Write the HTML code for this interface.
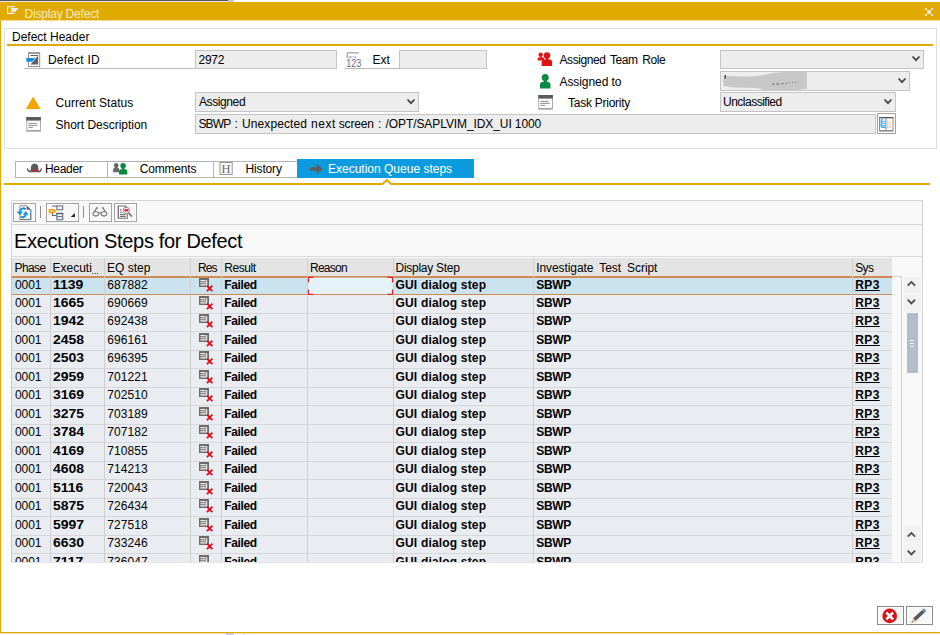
<!DOCTYPE html>
<html><head><meta charset="utf-8"><title>Display Defect</title>
<style>
html,body{margin:0;padding:0;background:#fff;}
body{width:940px;height:635px;overflow:hidden;position:relative;font-family:"Liberation Sans",sans-serif;font-size:12px;color:#000;}
.a{position:absolute;}
svg{position:absolute;overflow:visible;}
.t{position:absolute;white-space:nowrap;line-height:14px;height:14px;}
.fld{position:absolute;background:#EDEDED;border:1px solid #C4C4C4;box-sizing:border-box;}
.b{font-weight:700;}
.btn{position:absolute;box-sizing:border-box;border:1px solid #A2A2A2;background:#F6F6F6;box-shadow:inset 0 0 0 1px #FFFFFF;}
</style></head>
<body>
<div class="a" style="left:0;top:0;width:228px;height:1px;background:#585858"></div>
<div class="a" style="left:0;top:1px;width:228px;height:1px;background:#E6E6E6"></div>
<div class="a" style="left:228px;top:0;width:6px;height:2px;background:#C9C9C9"></div>
<div class="a" style="left:0;top:2px;width:940px;height:18px;background:#E0AA00"></div>
<div class="a" style="left:0;top:20px;width:940px;height:1px;background:#F3DD99"></div>
<svg style="left:0;top:0" width="24" height="20"><path d="M14.7 6.7H7.6V13.3H14.7" fill="none" stroke="#EFEDF6" stroke-width="1.2"/><path d="M10.9 7.9H18.5L15.4 11.7H10.9Z" fill="#EFEDF6"/></svg>
<div class="t" style="left:24.5px;top:6.7px;color:#F9ECBE;letter-spacing:-0.2px">Display Defect</div>
<svg style="left:924px;top:7px" width="10" height="10"><path d="M1.8 1.6L8.4 8.2M8.4 1.6L1.8 8.2" stroke="#F3F1F8" stroke-width="1.1" opacity="0.55"/><rect x="3.5" y="3.3" width="3.2" height="3.2" fill="#F1EFF8"/><rect x="1.2" y="1" width="1.6" height="1.6" fill="#F7F5FA"/><rect x="7.4" y="1" width="1.6" height="1.6" fill="#F7F5FA"/><rect x="1.2" y="7.2" width="1.6" height="1.6" fill="#F7F5FA"/><rect x="7.4" y="7.2" width="1.6" height="1.6" fill="#F7F5FA"/></svg>
<div class="a" style="left:0;top:20px;width:1px;height:614px;background:#E0AA00"></div>
<div class="a" style="left:1px;top:21px;width:1px;height:611px;background:#FBF3DA"></div>
<div class="a" style="left:0;top:632px;width:940px;height:1px;background:#E0AA00"></div>
<div class="a" style="left:0;top:633px;width:940px;height:1px;background:#F2E3B4"></div>
<div class="a" style="left:0;top:634px;width:940px;height:1px;background:#F8F8FA"></div>
<div class="a" style="left:226px;top:633px;width:8px;height:2px;background:#CACACE"></div>
<div class="a" style="left:243px;top:633px;width:2px;height:2px;background:#DEDEE2"></div>
<div class="a" style="left:4px;top:28px;width:933px;height:121px;border:1px solid #DEDEDE;box-sizing:border-box"></div>
<div class="t" style="left:12px;top:30px">Defect Header</div>
<div class="a" style="left:7px;top:44px;width:926px;height:2px;background:#E0AA00"></div>
<div class="a" style="left:24px;top:68px;width:171px;height:1px;background:#B9B9B9"></div>
<div class="t" style="left:48px;top:53px;letter-spacing:0.2px">Defect ID</div>
<div class="fld" style="left:195px;top:50px;width:142px;height:19px"></div>
<div class="t" style="left:198.5px;top:53px;letter-spacing:-0.25px">2972</div>
<div class="a" style="left:345px;top:68px;width:54px;height:1px;background:#B9B9B9"></div>
<div class="t" style="left:372.5px;top:53px">Ext</div>
<div class="fld" style="left:399px;top:50px;width:88px;height:19px"></div>
<div class="t" style="left:559.5px;top:53px;letter-spacing:-0.42px;word-spacing:1.7px">Assigned Team Role</div>
<div class="fld" style="left:720px;top:50px;width:204px;height:19px"></div>
<div class="t" style="left:559.5px;top:74.5px;letter-spacing:-0.08px">Assigned to</div>
<div class="fld" style="left:720px;top:71px;width:190px;height:20px"></div>
<svg style="left:720px;top:71px" width="100" height="20"><path d="M3.3 4.9L30 5.5C40 5.5 45 3.6 52 2.3C58 1.2 62 0.9 68 0.9H87V18C80 19 70 19 60 19.2H48C42 19 40 17.5 36 17L15 16.5C10 16.5 8 15 3.3 14.9Z" fill="#C7C7C7"/><rect x="4.6" y="3.9" width="1.3" height="3.8" fill="#3E3E66"/><path d="M52 13.2h2.5m1.5-.2h3.5m1.8-.4h2.4m2-.4h1.4m2-.4h1m2-.3h1m2-.2h1" stroke="#4A4A4A" stroke-width="0.9" opacity="0.75"/></svg>
<div class="t" style="left:55.5px;top:95.5px;letter-spacing:0.03px">Current Status</div>
<div class="fld" style="left:195px;top:92px;width:224px;height:20px"></div>
<div class="t" style="left:199px;top:95px;letter-spacing:-0.4px">Assigned</div>
<div class="t" style="left:568px;top:95.5px;letter-spacing:-0.25px">Task Priority</div>
<div class="fld" style="left:720px;top:92px;width:176px;height:20px"></div>
<div class="t" style="left:723px;top:95px;letter-spacing:-0.5px">Unclassified</div>
<div class="t" style="left:55.5px;top:117.5px;letter-spacing:-0.02px">Short Description</div>
<div class="fld" style="left:195px;top:114px;width:681px;height:20px"></div>
<div class="t" style="left:198.5px;top:117px"><span style="letter-spacing:-0.9px">SBWP</span><span style="word-spacing:0.9px"> : </span><span style="letter-spacing:0.08px">Unexpected</span><span style="word-spacing:0.7px"> </span><span style="letter-spacing:0.6px">next</span><span style="word-spacing:-0.6px"> </span><span style="letter-spacing:-0.17px">screen</span><span style="word-spacing:0.9px"> : </span><span style="letter-spacing:-0.094px">/OPT/SAPLVIM_IDX_UI 1000</span></div>
<div class="btn" style="left:877px;top:113px;width:19px;height:21px;background:#FBFBFB"></div>
<svg style="left:911.6px;top:56.4px" width="8" height="5"><path d="M0.5 0.5L4 4.2L7.5 0.5" fill="none" stroke="#424242" stroke-width="1.7"/></svg>
<svg style="left:898.0px;top:78.0px" width="8" height="5"><path d="M0.5 0.5L4 4.2L7.5 0.5" fill="none" stroke="#424242" stroke-width="1.7"/></svg>
<svg style="left:884.0px;top:99.10000000000001px" width="8" height="5"><path d="M0.5 0.5L4 4.2L7.5 0.5" fill="none" stroke="#424242" stroke-width="1.7"/></svg>
<svg style="left:407.2px;top:99.10000000000001px" width="8" height="5"><path d="M0.5 0.5L4 4.2L7.5 0.5" fill="none" stroke="#424242" stroke-width="1.7"/></svg>
<svg style="left:26px;top:52px" width="15" height="15"><rect x="2.5" y="0.7" width="11.2" height="13.8" fill="#fff" stroke="#8E8E8E"/><path d="M3 1.4H13.2" stroke="#9A9A9A" stroke-width="1.2"/><path d="M4.5 3.6H12V12.5H4.5Z" fill="#fff"/><path d="M12.1 3.4V12.6H4.4Z" fill="#606060"/><path d="M4.4 3.5H12.1" stroke="#606060" stroke-width="1"/><path d="M0.4 6H9.1L6.1 9.8H0.4Z" fill="#0A8FE6"/></svg>
<svg style="left:26px;top:96px" width="15" height="14"><path d="M7.1 0.5L14.7 13H-0.1Z" fill="#F0A800"/></svg>
<svg style="left:26px;top:117px" width="15" height="15"><rect x="0.3" y="0" width="14.6" height="14.7" fill="#A4A4A4"/><rect x="1.2" y="3.4" width="12.8" height="9.6" fill="#fff"/><rect x="0.3" y="0" width="14.6" height="3.5" fill="#5C5C5C"/><path d="M2.4 6.4H10.6M2.4 8.4H11.6M2.4 10.4H7" stroke="#8C8C8C" stroke-width="1"/></svg>
<svg style="left:538px;top:95px" width="15" height="15"><rect x="0.3" y="0" width="14.6" height="14.7" fill="#A4A4A4"/><rect x="1.2" y="3.4" width="12.8" height="9.6" fill="#fff"/><rect x="0.3" y="0" width="14.6" height="3.5" fill="#5C5C5C"/><path d="M2.4 6.4H10.6M2.4 8.4H11.6M2.4 10.4H7" stroke="#8C8C8C" stroke-width="1"/></svg>
<svg style="left:537px;top:52px" width="16" height="14"><g fill="#DC1414"><circle cx="3.7" cy="2.7" r="2.2"/><path d="M0.7 8.6V6.8Q0.7 5.2 2.4 5.2H5.6Q7.2 5.2 7.2 6.8V8.6Z"/><circle cx="10" cy="3.5" r="3.2"/><rect x="8.6" y="5.5" width="2.8" height="3"/><path d="M4.6 13.9V10Q4.6 7.5 7.2 7.5H12.6Q15.1 7.5 15.1 10V13.9Z"/></g></svg>
<svg style="left:540px;top:74px" width="10.5" height="14.5" viewBox="0 0 10.5 14.5" preserveAspectRatio="none"><g fill="#0A8A40"><circle cx="5.2" cy="3.6" r="3.5"/><rect x="3.6" y="6" width="3.3" height="3"/><path d="M0 14.5V10.6Q0 7.9 2.6 7.9H7.9Q10.5 7.9 10.5 10.6V14.5Z"/></g></svg>
<svg style="left:346px;top:52px" width="16" height="16"><path d="M1.2 6.2V0.9H12.9" fill="none" stroke="#8C8890" stroke-width="1"/><path d="M3.2 4.2v2M4.6 4.2v2M6 4.2v2M7.4 4.2l2 2M9.6 4.2v2" stroke="#8A92B0" stroke-width="0.8"/><text x="0.2" y="14.7" font-family="Liberation Sans, sans-serif" font-size="10" fill="#5E6A86" textLength="15" lengthAdjust="spacingAndGlyphs">123</text></svg>
<svg style="left:879px;top:117px" width="15" height="15"><rect x="0.5" y="0.6" width="13.5" height="13.4" fill="#fff" stroke="#8A86A8" stroke-width="1"/><path d="M0.2 0.7H14.3" stroke="#555" stroke-width="1.3"/><path d="M0.5 13.6H14" stroke="#8C8C8C" stroke-width="1.2"/><path d="M6.9 1V13.5" stroke="#9A9A9A" stroke-width="1.2"/><path d="M2.2 2.8V10.5" stroke="#1E9EE8" stroke-width="1.2"/><path d="M2 2.8H4M3 4.8H6.2M3 6.8H6.2M3 8.8H6.2M3 10.4H6.2" stroke="#2BA6EC" stroke-width="1.1"/><path d="M8.2 4.8H12.6M8.2 6.8H12.6M8.2 8.8H12.6M8.2 10.4H12.6" stroke="#B0A8B8" stroke-width="1" stroke-dasharray="1.2 1"/><path d="M13.3 1.3V13" stroke="#F2C58E" stroke-width="0.8"/></svg>
<div class="a" style="left:15px;top:161px;width:283px;height:17px;border:1px solid #B2B2B2;box-sizing:border-box;background:#fff"></div>
<div class="a" style="left:107px;top:162px;width:1px;height:15px;background:#B2B2B2"></div>
<div class="a" style="left:213px;top:162px;width:1px;height:15px;background:#B2B2B2"></div>
<div class="t" style="left:45px;top:162.3px;letter-spacing:-0.3px">Header</div>
<div class="t" style="left:139.7px;top:162.3px;letter-spacing:-0.18px">Comments</div>
<div class="t" style="left:245.5px;top:162.3px;letter-spacing:-0.15px">History</div>
<div class="a" style="left:297px;top:159px;width:177px;height:19px;background:#0D9BE0"></div>
<div class="t" style="left:328px;top:162px;color:#fff">Execution Queue steps</div>
<svg style="left:27px;top:163px" width="15" height="10"><path d="M3.7 7.2Q3.4 0.4 7.6 0.4Q11.8 0.4 11.5 7.2Z" fill="#5C5C5C"/><rect x="3.5" y="6.8" width="8.2" height="1.8" fill="#C0282C"/><path d="M0.4 5.3Q1 8.9 3.8 8.7H11.4Q14 8.9 14.5 5.3" fill="none" stroke="#4A4A5A" stroke-width="1.1"/></svg>
<svg style="left:113px;top:162.6px" width="7" height="10"><g fill="#686868"><ellipse cx="3.2" cy="2.5" rx="2.3" ry="2.4"/><rect x="1.8" y="3.8" width="2.8" height="2.4"/><path d="M0.2 9.3V6.4Q0.2 5 1.6 5H4.8Q6.2 5 6.2 6.4V9.3Z"/></g></svg>
<svg style="left:119.3px;top:162.8px" width="8.3" height="11.5" viewBox="0 0 10.5 14.5" preserveAspectRatio="none"><g fill="#0A8A40"><circle cx="5.2" cy="3.6" r="3.5"/><rect x="3.6" y="6" width="3.3" height="3"/><path d="M0 14.5V10.6Q0 7.9 2.6 7.9H7.9Q10.5 7.9 10.5 10.6V14.5Z"/></g></svg>
<svg style="left:219px;top:162px" width="14" height="13"><rect x="1" y="0.5" width="12.2" height="12" fill="#fff" stroke="#939393" stroke-width="1"/><text x="2.6" y="11" font-family="Liberation Serif, serif" font-size="13" fill="#6E6266" textLength="9" lengthAdjust="spacingAndGlyphs">H</text></svg>
<svg style="left:310px;top:163.5px" width="13" height="10"><path d="M0 3.3H6.5V0L13 5L6.5 10V6.7H0Z" fill="#5E5E5E"/></svg>
<svg style="left:4px;top:178px" width="928" height="9"><path d="M0 6H378.5L382.8 2L387.2 6H926" fill="none" stroke="#E0AA00" stroke-width="1.9"/></svg>
<div class="a" style="left:11px;top:200px;width:912px;height:362px;background:#F8F8F8;border:1px solid #D6D6D6;border-bottom:none;box-sizing:border-box"></div>
<div class="a" style="left:12px;top:224px;width:910px;height:1px;background:#D6D6D6"></div>
<div class="a" style="left:12px;top:256px;width:910px;height:1px;background:#DADADA"></div>
<div class="a" style="left:11px;top:562px;width:912px;height:1px;background:#E4E4E4"></div>
<div class="btn" style="left:13px;top:203px;width:23px;height:19px"></div>
<div class="btn" style="left:46px;top:203px;width:33px;height:19px"></div>
<div class="btn" style="left:89px;top:203px;width:23px;height:19px"></div>
<div class="btn" style="left:114px;top:203px;width:23px;height:19px"></div>
<div class="a" style="left:40px;top:206px;width:1px;height:12px;background:#8E8E8E"></div>
<div class="a" style="left:83px;top:206px;width:1px;height:12px;background:#8E8E8E"></div>
<svg style="left:13px;top:203px" width="23" height="19"><path d="M6.9 2.7H13.6L17.7 6.8V16.5H6.9Z" fill="#fff" stroke="#8C8C8C" stroke-width="1"/><path d="M13.6 2.6L17.8 6.8H13.6Z" fill="#6A5A5A"/><path d="M17.8 6.8V16.6" stroke="#3D78C8" stroke-width="0.9"/><path d="M6.9 16.6H17.8" stroke="#6E6E6E" stroke-width="1.1"/><path d="M6.9 3V16" stroke="#E8C49A" stroke-width="0.8"/><g fill="none" stroke="#0F8FEE" stroke-width="2"><path d="M12.6 6.2A3.5 3.5 0 0 0 6.9 8.6"/><path d="M7.6 13.6A3.5 3.5 0 0 0 12.9 11.6"/></g><path d="M3.6 8.4H10.2L6.9 12.2Z" fill="#0F8FEE"/><path d="M9.7 11.8H15.7L12.7 8Z" fill="#0F8FEE"/></svg>
<svg style="left:46px;top:203px" width="33" height="19"><path d="M6.2 3.1H11" stroke="#7A8294" stroke-width="1.3"/><rect x="10.9" y="2.9" width="5.8" height="3.8" fill="#F2F8FF" stroke="#6C7488" stroke-width="1.1"/><path d="M6.4 10V12.5H10.6" fill="none" stroke="#5E6474" stroke-width="1.1"/><rect x="10.8" y="10.5" width="5.9" height="6.2" fill="#EEF4FC" stroke="#6C7890" stroke-width="1.2"/><path d="M10.4 10.5H17.2" stroke="#585C66" stroke-width="1.3"/><path d="M11 13.6H16.6" stroke="#6C7890" stroke-width="1.1"/><path d="M2.7 5.9H7.8L10.5 8.05L7.8 10.2H2.7Z" fill="#F2A200"/><path d="M4.2 8.05H7.4" stroke="#FCEBC0" stroke-width="1.1"/><path d="M28.9 9.9V14.1H24.8Z" fill="#1A1A1A"/></svg>
<svg style="left:89px;top:203px" width="23" height="19"><g fill="none" stroke="#747474" stroke-width="1.15"><path d="M4.9 9.2L7.9 4.6L8.9 5.4"/><path d="M16.7 9.2L13.9 4.6L12.9 5.4"/><rect x="4" y="8.7" width="5.5" height="4.1" rx="1.9" fill="#FDFDFD"/><rect x="12.2" y="8.7" width="5.5" height="4.1" rx="1.9" fill="#FDFDFD"/><path d="M9.4 10.1H12.3"/></g></svg>
<svg style="left:114px;top:203px" width="23" height="19"><path d="M4.3 3H11.3L13.2 5V15.2H4.3Z" fill="#fff" stroke="#6C6C6C" stroke-width="1.1"/><path d="M4.3 3V15.2" stroke="#8A5A9A" stroke-width="0.6"/><path d="M5.9 6.9H7.6M5.9 9.2H8.2M5.9 11.5H11.6M5.9 13.4H11.6" stroke="#6E6E6E" stroke-width="1.1"/><circle cx="12.3" cy="7.4" r="3.2" fill="#F6F2F4" stroke="#8E8E98" stroke-width="1"/><ellipse cx="12.4" cy="7.2" rx="2.2" ry="1.25" fill="#E61C24"/><path d="M14.6 9.9L17.9 13.6" stroke="#6A6A6A" stroke-width="1.5"/></svg>
<div class="a" style="left:14px;top:229px;font-size:20px;line-height:24px;white-space:nowrap;letter-spacing:-0.33px">Execution Steps for Defect</div>
<div class="a" style="left:12px;top:258px;width:880px;height:19px;background:#E4E4E4"></div>
<div class="t" style="left:14.5px;top:261px;letter-spacing:-0.6px;word-spacing:0px">Phase</div>
<div class="t" style="left:52.5px;top:261px;letter-spacing:0px;word-spacing:0px">Executi</div>
<div class="t" style="left:107px;top:261px;letter-spacing:0px;word-spacing:0px">EQ step</div>
<div class="t" style="left:198px;top:261px;letter-spacing:-0.9px;word-spacing:0px">Res</div>
<div class="t" style="left:224.2px;top:261px;letter-spacing:-0.4px;word-spacing:0px">Result</div>
<div class="t" style="left:310px;top:261px;letter-spacing:-0.75px;word-spacing:0px">Reason</div>
<div class="t" style="left:395.5px;top:261px;letter-spacing:-0.27px;word-spacing:0px">Display Step</div>
<div class="t" style="left:536.2px;top:261px;letter-spacing:-0.08px;word-spacing:2.9px">Investigate Test Script</div>
<div class="t" style="left:855.2px;top:261px;letter-spacing:-0.6px;word-spacing:0px">Sys</div>
<div class="a" style="left:92px;top:273px;width:1px;height:1px;background:#444"></div><div class="a" style="left:94px;top:273px;width:2px;height:1px;background:#777"></div><div class="a" style="left:97px;top:273px;width:1px;height:1px;background:#444"></div>
<div class="a" style="left:12px;top:277px;width:880px;height:285px;overflow:hidden">
<div class="a" style="left:0;top:0.60px;width:880px;height:17.90px;background:#CBE2EF"></div>
<div class="t" style="left:3px;top:1.00px;letter-spacing:-0.1px">0001</div>
<div class="t b" style="left:40.5px;top:1.00px;transform:scaleX(1.165);transform-origin:0 50%">1139</div>
<div class="t" style="left:95.3px;top:1.00px;letter-spacing:0.05px">687882</div>
<div class="t b" style="left:212.2px;top:1.00px;letter-spacing:-0.35px">Failed</div>
<div class="t b" style="left:383.5px;top:1.00px;letter-spacing:0.18px">GUI dialog step</div>
<div class="t b" style="left:524.2px;top:1.00px;letter-spacing:-0.3px">SBWP</div>
<div class="t b" style="left:843.3px;top:1.00px;letter-spacing:0.35px;text-decoration:underline">RP3</div>
<svg style="left:187px;top:1.20px" width="15" height="14"><rect x="0" y="0" width="10" height="9" fill="#6C6C6C"/><path d="M1.4 2.6H6.2" stroke="#EDEDED" stroke-width="1.2"/><path d="M7.4 2.2V7.8" stroke="#E8E8E8" stroke-width="1.6"/><path d="M1.4 4.8H6M1.4 6.9H6.4" stroke="#F4F4F4" stroke-width="1.1"/><path d="M7.9 7.6L13.4 13.2M13.4 7.6L7.9 13.2" stroke="#E0101C" stroke-width="1.9"/></svg>
<div class="a" style="left:0;top:18.00px;width:880px;height:19.00px;background:#E9EDF1"></div>
<div class="a" style="left:0;top:35.50px;width:880px;height:1px;background:#D5D8DB"></div>
<div class="t" style="left:3px;top:18.90px;letter-spacing:-0.1px">0001</div>
<div class="t b" style="left:40.5px;top:18.90px;transform:scaleX(1.165);transform-origin:0 50%">1665</div>
<div class="t" style="left:95.3px;top:18.90px;letter-spacing:0.05px">690669</div>
<div class="t b" style="left:212.2px;top:18.90px;letter-spacing:-0.35px">Failed</div>
<div class="t b" style="left:383.5px;top:18.90px;letter-spacing:0.18px">GUI dialog step</div>
<div class="t b" style="left:524.2px;top:18.90px;letter-spacing:-0.3px">SBWP</div>
<div class="t b" style="left:843.3px;top:18.90px;letter-spacing:0.35px;text-decoration:underline">RP3</div>
<svg style="left:187px;top:18.60px" width="15" height="14"><rect x="0" y="0" width="10" height="9" fill="#6C6C6C"/><path d="M1.4 2.6H6.2" stroke="#EDEDED" stroke-width="1.2"/><path d="M7.4 2.2V7.8" stroke="#E8E8E8" stroke-width="1.6"/><path d="M1.4 4.8H6M1.4 6.9H6.4" stroke="#F4F4F4" stroke-width="1.1"/><path d="M7.9 7.6L13.4 13.2M13.4 7.6L7.9 13.2" stroke="#E0101C" stroke-width="1.9"/></svg>
<div class="a" style="left:0;top:36.50px;width:880px;height:19.00px;background:#E9EDF1"></div>
<div class="a" style="left:0;top:54.00px;width:880px;height:1px;background:#D5D8DB"></div>
<div class="t" style="left:3px;top:37.40px;letter-spacing:-0.1px">0001</div>
<div class="t b" style="left:40.5px;top:37.40px;transform:scaleX(1.165);transform-origin:0 50%">1942</div>
<div class="t" style="left:95.3px;top:37.40px;letter-spacing:0.05px">692438</div>
<div class="t b" style="left:212.2px;top:37.40px;letter-spacing:-0.35px">Failed</div>
<div class="t b" style="left:383.5px;top:37.40px;letter-spacing:0.18px">GUI dialog step</div>
<div class="t b" style="left:524.2px;top:37.40px;letter-spacing:-0.3px">SBWP</div>
<div class="t b" style="left:843.3px;top:37.40px;letter-spacing:0.35px;text-decoration:underline">RP3</div>
<svg style="left:187px;top:37.10px" width="15" height="14"><rect x="0" y="0" width="10" height="9" fill="#6C6C6C"/><path d="M1.4 2.6H6.2" stroke="#EDEDED" stroke-width="1.2"/><path d="M7.4 2.2V7.8" stroke="#E8E8E8" stroke-width="1.6"/><path d="M1.4 4.8H6M1.4 6.9H6.4" stroke="#F4F4F4" stroke-width="1.1"/><path d="M7.9 7.6L13.4 13.2M13.4 7.6L7.9 13.2" stroke="#E0101C" stroke-width="1.9"/></svg>
<div class="a" style="left:0;top:55.00px;width:880px;height:19.00px;background:#E9EDF1"></div>
<div class="a" style="left:0;top:72.50px;width:880px;height:1px;background:#D5D8DB"></div>
<div class="t" style="left:3px;top:55.90px;letter-spacing:-0.1px">0001</div>
<div class="t b" style="left:40.5px;top:55.90px;transform:scaleX(1.165);transform-origin:0 50%">2458</div>
<div class="t" style="left:95.3px;top:55.90px;letter-spacing:0.05px">696161</div>
<div class="t b" style="left:212.2px;top:55.90px;letter-spacing:-0.35px">Failed</div>
<div class="t b" style="left:383.5px;top:55.90px;letter-spacing:0.18px">GUI dialog step</div>
<div class="t b" style="left:524.2px;top:55.90px;letter-spacing:-0.3px">SBWP</div>
<div class="t b" style="left:843.3px;top:55.90px;letter-spacing:0.35px;text-decoration:underline">RP3</div>
<svg style="left:187px;top:55.60px" width="15" height="14"><rect x="0" y="0" width="10" height="9" fill="#6C6C6C"/><path d="M1.4 2.6H6.2" stroke="#EDEDED" stroke-width="1.2"/><path d="M7.4 2.2V7.8" stroke="#E8E8E8" stroke-width="1.6"/><path d="M1.4 4.8H6M1.4 6.9H6.4" stroke="#F4F4F4" stroke-width="1.1"/><path d="M7.9 7.6L13.4 13.2M13.4 7.6L7.9 13.2" stroke="#E0101C" stroke-width="1.9"/></svg>
<div class="a" style="left:0;top:73.50px;width:880px;height:19.00px;background:#E9EDF1"></div>
<div class="a" style="left:0;top:91.00px;width:880px;height:1px;background:#D5D8DB"></div>
<div class="t" style="left:3px;top:74.40px;letter-spacing:-0.1px">0001</div>
<div class="t b" style="left:40.5px;top:74.40px;transform:scaleX(1.165);transform-origin:0 50%">2503</div>
<div class="t" style="left:95.3px;top:74.40px;letter-spacing:0.05px">696395</div>
<div class="t b" style="left:212.2px;top:74.40px;letter-spacing:-0.35px">Failed</div>
<div class="t b" style="left:383.5px;top:74.40px;letter-spacing:0.18px">GUI dialog step</div>
<div class="t b" style="left:524.2px;top:74.40px;letter-spacing:-0.3px">SBWP</div>
<div class="t b" style="left:843.3px;top:74.40px;letter-spacing:0.35px;text-decoration:underline">RP3</div>
<svg style="left:187px;top:74.10px" width="15" height="14"><rect x="0" y="0" width="10" height="9" fill="#6C6C6C"/><path d="M1.4 2.6H6.2" stroke="#EDEDED" stroke-width="1.2"/><path d="M7.4 2.2V7.8" stroke="#E8E8E8" stroke-width="1.6"/><path d="M1.4 4.8H6M1.4 6.9H6.4" stroke="#F4F4F4" stroke-width="1.1"/><path d="M7.9 7.6L13.4 13.2M13.4 7.6L7.9 13.2" stroke="#E0101C" stroke-width="1.9"/></svg>
<div class="a" style="left:0;top:92.00px;width:880px;height:19.00px;background:#E9EDF1"></div>
<div class="a" style="left:0;top:109.50px;width:880px;height:1px;background:#D5D8DB"></div>
<div class="t" style="left:3px;top:92.90px;letter-spacing:-0.1px">0001</div>
<div class="t b" style="left:40.5px;top:92.90px;transform:scaleX(1.165);transform-origin:0 50%">2959</div>
<div class="t" style="left:95.3px;top:92.90px;letter-spacing:0.05px">701221</div>
<div class="t b" style="left:212.2px;top:92.90px;letter-spacing:-0.35px">Failed</div>
<div class="t b" style="left:383.5px;top:92.90px;letter-spacing:0.18px">GUI dialog step</div>
<div class="t b" style="left:524.2px;top:92.90px;letter-spacing:-0.3px">SBWP</div>
<div class="t b" style="left:843.3px;top:92.90px;letter-spacing:0.35px;text-decoration:underline">RP3</div>
<svg style="left:187px;top:92.60px" width="15" height="14"><rect x="0" y="0" width="10" height="9" fill="#6C6C6C"/><path d="M1.4 2.6H6.2" stroke="#EDEDED" stroke-width="1.2"/><path d="M7.4 2.2V7.8" stroke="#E8E8E8" stroke-width="1.6"/><path d="M1.4 4.8H6M1.4 6.9H6.4" stroke="#F4F4F4" stroke-width="1.1"/><path d="M7.9 7.6L13.4 13.2M13.4 7.6L7.9 13.2" stroke="#E0101C" stroke-width="1.9"/></svg>
<div class="a" style="left:0;top:110.50px;width:880px;height:19.00px;background:#E9EDF1"></div>
<div class="a" style="left:0;top:128.00px;width:880px;height:1px;background:#D5D8DB"></div>
<div class="t" style="left:3px;top:111.40px;letter-spacing:-0.1px">0001</div>
<div class="t b" style="left:40.5px;top:111.40px;transform:scaleX(1.165);transform-origin:0 50%">3169</div>
<div class="t" style="left:95.3px;top:111.40px;letter-spacing:0.05px">702510</div>
<div class="t b" style="left:212.2px;top:111.40px;letter-spacing:-0.35px">Failed</div>
<div class="t b" style="left:383.5px;top:111.40px;letter-spacing:0.18px">GUI dialog step</div>
<div class="t b" style="left:524.2px;top:111.40px;letter-spacing:-0.3px">SBWP</div>
<div class="t b" style="left:843.3px;top:111.40px;letter-spacing:0.35px;text-decoration:underline">RP3</div>
<svg style="left:187px;top:111.10px" width="15" height="14"><rect x="0" y="0" width="10" height="9" fill="#6C6C6C"/><path d="M1.4 2.6H6.2" stroke="#EDEDED" stroke-width="1.2"/><path d="M7.4 2.2V7.8" stroke="#E8E8E8" stroke-width="1.6"/><path d="M1.4 4.8H6M1.4 6.9H6.4" stroke="#F4F4F4" stroke-width="1.1"/><path d="M7.9 7.6L13.4 13.2M13.4 7.6L7.9 13.2" stroke="#E0101C" stroke-width="1.9"/></svg>
<div class="a" style="left:0;top:129.00px;width:880px;height:19.00px;background:#E9EDF1"></div>
<div class="a" style="left:0;top:146.50px;width:880px;height:1px;background:#D5D8DB"></div>
<div class="t" style="left:3px;top:129.90px;letter-spacing:-0.1px">0001</div>
<div class="t b" style="left:40.5px;top:129.90px;transform:scaleX(1.165);transform-origin:0 50%">3275</div>
<div class="t" style="left:95.3px;top:129.90px;letter-spacing:0.05px">703189</div>
<div class="t b" style="left:212.2px;top:129.90px;letter-spacing:-0.35px">Failed</div>
<div class="t b" style="left:383.5px;top:129.90px;letter-spacing:0.18px">GUI dialog step</div>
<div class="t b" style="left:524.2px;top:129.90px;letter-spacing:-0.3px">SBWP</div>
<div class="t b" style="left:843.3px;top:129.90px;letter-spacing:0.35px;text-decoration:underline">RP3</div>
<svg style="left:187px;top:129.60px" width="15" height="14"><rect x="0" y="0" width="10" height="9" fill="#6C6C6C"/><path d="M1.4 2.6H6.2" stroke="#EDEDED" stroke-width="1.2"/><path d="M7.4 2.2V7.8" stroke="#E8E8E8" stroke-width="1.6"/><path d="M1.4 4.8H6M1.4 6.9H6.4" stroke="#F4F4F4" stroke-width="1.1"/><path d="M7.9 7.6L13.4 13.2M13.4 7.6L7.9 13.2" stroke="#E0101C" stroke-width="1.9"/></svg>
<div class="a" style="left:0;top:147.50px;width:880px;height:19.00px;background:#E9EDF1"></div>
<div class="a" style="left:0;top:165.00px;width:880px;height:1px;background:#D5D8DB"></div>
<div class="t" style="left:3px;top:148.40px;letter-spacing:-0.1px">0001</div>
<div class="t b" style="left:40.5px;top:148.40px;transform:scaleX(1.165);transform-origin:0 50%">3784</div>
<div class="t" style="left:95.3px;top:148.40px;letter-spacing:0.05px">707182</div>
<div class="t b" style="left:212.2px;top:148.40px;letter-spacing:-0.35px">Failed</div>
<div class="t b" style="left:383.5px;top:148.40px;letter-spacing:0.18px">GUI dialog step</div>
<div class="t b" style="left:524.2px;top:148.40px;letter-spacing:-0.3px">SBWP</div>
<div class="t b" style="left:843.3px;top:148.40px;letter-spacing:0.35px;text-decoration:underline">RP3</div>
<svg style="left:187px;top:148.10px" width="15" height="14"><rect x="0" y="0" width="10" height="9" fill="#6C6C6C"/><path d="M1.4 2.6H6.2" stroke="#EDEDED" stroke-width="1.2"/><path d="M7.4 2.2V7.8" stroke="#E8E8E8" stroke-width="1.6"/><path d="M1.4 4.8H6M1.4 6.9H6.4" stroke="#F4F4F4" stroke-width="1.1"/><path d="M7.9 7.6L13.4 13.2M13.4 7.6L7.9 13.2" stroke="#E0101C" stroke-width="1.9"/></svg>
<div class="a" style="left:0;top:166.00px;width:880px;height:19.00px;background:#E9EDF1"></div>
<div class="a" style="left:0;top:183.50px;width:880px;height:1px;background:#D5D8DB"></div>
<div class="t" style="left:3px;top:166.90px;letter-spacing:-0.1px">0001</div>
<div class="t b" style="left:40.5px;top:166.90px;transform:scaleX(1.165);transform-origin:0 50%">4169</div>
<div class="t" style="left:95.3px;top:166.90px;letter-spacing:0.05px">710855</div>
<div class="t b" style="left:212.2px;top:166.90px;letter-spacing:-0.35px">Failed</div>
<div class="t b" style="left:383.5px;top:166.90px;letter-spacing:0.18px">GUI dialog step</div>
<div class="t b" style="left:524.2px;top:166.90px;letter-spacing:-0.3px">SBWP</div>
<div class="t b" style="left:843.3px;top:166.90px;letter-spacing:0.35px;text-decoration:underline">RP3</div>
<svg style="left:187px;top:166.60px" width="15" height="14"><rect x="0" y="0" width="10" height="9" fill="#6C6C6C"/><path d="M1.4 2.6H6.2" stroke="#EDEDED" stroke-width="1.2"/><path d="M7.4 2.2V7.8" stroke="#E8E8E8" stroke-width="1.6"/><path d="M1.4 4.8H6M1.4 6.9H6.4" stroke="#F4F4F4" stroke-width="1.1"/><path d="M7.9 7.6L13.4 13.2M13.4 7.6L7.9 13.2" stroke="#E0101C" stroke-width="1.9"/></svg>
<div class="a" style="left:0;top:184.50px;width:880px;height:19.00px;background:#E9EDF1"></div>
<div class="a" style="left:0;top:202.00px;width:880px;height:1px;background:#D5D8DB"></div>
<div class="t" style="left:3px;top:185.40px;letter-spacing:-0.1px">0001</div>
<div class="t b" style="left:40.5px;top:185.40px;transform:scaleX(1.165);transform-origin:0 50%">4608</div>
<div class="t" style="left:95.3px;top:185.40px;letter-spacing:0.05px">714213</div>
<div class="t b" style="left:212.2px;top:185.40px;letter-spacing:-0.35px">Failed</div>
<div class="t b" style="left:383.5px;top:185.40px;letter-spacing:0.18px">GUI dialog step</div>
<div class="t b" style="left:524.2px;top:185.40px;letter-spacing:-0.3px">SBWP</div>
<div class="t b" style="left:843.3px;top:185.40px;letter-spacing:0.35px;text-decoration:underline">RP3</div>
<svg style="left:187px;top:185.10px" width="15" height="14"><rect x="0" y="0" width="10" height="9" fill="#6C6C6C"/><path d="M1.4 2.6H6.2" stroke="#EDEDED" stroke-width="1.2"/><path d="M7.4 2.2V7.8" stroke="#E8E8E8" stroke-width="1.6"/><path d="M1.4 4.8H6M1.4 6.9H6.4" stroke="#F4F4F4" stroke-width="1.1"/><path d="M7.9 7.6L13.4 13.2M13.4 7.6L7.9 13.2" stroke="#E0101C" stroke-width="1.9"/></svg>
<div class="a" style="left:0;top:203.00px;width:880px;height:19.00px;background:#E9EDF1"></div>
<div class="a" style="left:0;top:220.50px;width:880px;height:1px;background:#D5D8DB"></div>
<div class="t" style="left:3px;top:203.90px;letter-spacing:-0.1px">0001</div>
<div class="t b" style="left:40.5px;top:203.90px;transform:scaleX(1.165);transform-origin:0 50%">5116</div>
<div class="t" style="left:95.3px;top:203.90px;letter-spacing:0.05px">720043</div>
<div class="t b" style="left:212.2px;top:203.90px;letter-spacing:-0.35px">Failed</div>
<div class="t b" style="left:383.5px;top:203.90px;letter-spacing:0.18px">GUI dialog step</div>
<div class="t b" style="left:524.2px;top:203.90px;letter-spacing:-0.3px">SBWP</div>
<div class="t b" style="left:843.3px;top:203.90px;letter-spacing:0.35px;text-decoration:underline">RP3</div>
<svg style="left:187px;top:203.60px" width="15" height="14"><rect x="0" y="0" width="10" height="9" fill="#6C6C6C"/><path d="M1.4 2.6H6.2" stroke="#EDEDED" stroke-width="1.2"/><path d="M7.4 2.2V7.8" stroke="#E8E8E8" stroke-width="1.6"/><path d="M1.4 4.8H6M1.4 6.9H6.4" stroke="#F4F4F4" stroke-width="1.1"/><path d="M7.9 7.6L13.4 13.2M13.4 7.6L7.9 13.2" stroke="#E0101C" stroke-width="1.9"/></svg>
<div class="a" style="left:0;top:221.50px;width:880px;height:19.00px;background:#E9EDF1"></div>
<div class="a" style="left:0;top:239.00px;width:880px;height:1px;background:#D5D8DB"></div>
<div class="t" style="left:3px;top:222.40px;letter-spacing:-0.1px">0001</div>
<div class="t b" style="left:40.5px;top:222.40px;transform:scaleX(1.165);transform-origin:0 50%">5875</div>
<div class="t" style="left:95.3px;top:222.40px;letter-spacing:0.05px">726434</div>
<div class="t b" style="left:212.2px;top:222.40px;letter-spacing:-0.35px">Failed</div>
<div class="t b" style="left:383.5px;top:222.40px;letter-spacing:0.18px">GUI dialog step</div>
<div class="t b" style="left:524.2px;top:222.40px;letter-spacing:-0.3px">SBWP</div>
<div class="t b" style="left:843.3px;top:222.40px;letter-spacing:0.35px;text-decoration:underline">RP3</div>
<svg style="left:187px;top:222.10px" width="15" height="14"><rect x="0" y="0" width="10" height="9" fill="#6C6C6C"/><path d="M1.4 2.6H6.2" stroke="#EDEDED" stroke-width="1.2"/><path d="M7.4 2.2V7.8" stroke="#E8E8E8" stroke-width="1.6"/><path d="M1.4 4.8H6M1.4 6.9H6.4" stroke="#F4F4F4" stroke-width="1.1"/><path d="M7.9 7.6L13.4 13.2M13.4 7.6L7.9 13.2" stroke="#E0101C" stroke-width="1.9"/></svg>
<div class="a" style="left:0;top:240.00px;width:880px;height:19.00px;background:#E9EDF1"></div>
<div class="a" style="left:0;top:257.50px;width:880px;height:1px;background:#D5D8DB"></div>
<div class="t" style="left:3px;top:240.90px;letter-spacing:-0.1px">0001</div>
<div class="t b" style="left:40.5px;top:240.90px;transform:scaleX(1.165);transform-origin:0 50%">5997</div>
<div class="t" style="left:95.3px;top:240.90px;letter-spacing:0.05px">727518</div>
<div class="t b" style="left:212.2px;top:240.90px;letter-spacing:-0.35px">Failed</div>
<div class="t b" style="left:383.5px;top:240.90px;letter-spacing:0.18px">GUI dialog step</div>
<div class="t b" style="left:524.2px;top:240.90px;letter-spacing:-0.3px">SBWP</div>
<div class="t b" style="left:843.3px;top:240.90px;letter-spacing:0.35px;text-decoration:underline">RP3</div>
<svg style="left:187px;top:240.60px" width="15" height="14"><rect x="0" y="0" width="10" height="9" fill="#6C6C6C"/><path d="M1.4 2.6H6.2" stroke="#EDEDED" stroke-width="1.2"/><path d="M7.4 2.2V7.8" stroke="#E8E8E8" stroke-width="1.6"/><path d="M1.4 4.8H6M1.4 6.9H6.4" stroke="#F4F4F4" stroke-width="1.1"/><path d="M7.9 7.6L13.4 13.2M13.4 7.6L7.9 13.2" stroke="#E0101C" stroke-width="1.9"/></svg>
<div class="a" style="left:0;top:258.50px;width:880px;height:19.00px;background:#E9EDF1"></div>
<div class="a" style="left:0;top:276.00px;width:880px;height:1px;background:#D5D8DB"></div>
<div class="t" style="left:3px;top:259.40px;letter-spacing:-0.1px">0001</div>
<div class="t b" style="left:40.5px;top:259.40px;transform:scaleX(1.165);transform-origin:0 50%">6630</div>
<div class="t" style="left:95.3px;top:259.40px;letter-spacing:0.05px">733246</div>
<div class="t b" style="left:212.2px;top:259.40px;letter-spacing:-0.35px">Failed</div>
<div class="t b" style="left:383.5px;top:259.40px;letter-spacing:0.18px">GUI dialog step</div>
<div class="t b" style="left:524.2px;top:259.40px;letter-spacing:-0.3px">SBWP</div>
<div class="t b" style="left:843.3px;top:259.40px;letter-spacing:0.35px;text-decoration:underline">RP3</div>
<svg style="left:187px;top:259.10px" width="15" height="14"><rect x="0" y="0" width="10" height="9" fill="#6C6C6C"/><path d="M1.4 2.6H6.2" stroke="#EDEDED" stroke-width="1.2"/><path d="M7.4 2.2V7.8" stroke="#E8E8E8" stroke-width="1.6"/><path d="M1.4 4.8H6M1.4 6.9H6.4" stroke="#F4F4F4" stroke-width="1.1"/><path d="M7.9 7.6L13.4 13.2M13.4 7.6L7.9 13.2" stroke="#E0101C" stroke-width="1.9"/></svg>
<div class="a" style="left:0;top:277.00px;width:880px;height:19.00px;background:#E9EDF1"></div>
<div class="a" style="left:0;top:294.50px;width:880px;height:1px;background:#D5D8DB"></div>
<div class="t" style="left:3px;top:277.90px;letter-spacing:-0.1px">0001</div>
<div class="t b" style="left:40.5px;top:277.90px;transform:scaleX(1.165);transform-origin:0 50%">7117</div>
<div class="t" style="left:95.3px;top:277.90px;letter-spacing:0.05px">736047</div>
<div class="t b" style="left:212.2px;top:277.90px;letter-spacing:-0.35px">Failed</div>
<div class="t b" style="left:383.5px;top:277.90px;letter-spacing:0.18px">GUI dialog step</div>
<div class="t b" style="left:524.2px;top:277.90px;letter-spacing:-0.3px">SBWP</div>
<div class="t b" style="left:843.3px;top:277.90px;letter-spacing:0.35px;text-decoration:underline">RP3</div>
<svg style="left:187px;top:277.60px" width="15" height="14"><rect x="0" y="0" width="10" height="9" fill="#6C6C6C"/><path d="M1.4 2.6H6.2" stroke="#EDEDED" stroke-width="1.2"/><path d="M7.4 2.2V7.8" stroke="#E8E8E8" stroke-width="1.6"/><path d="M1.4 4.8H6M1.4 6.9H6.4" stroke="#F4F4F4" stroke-width="1.1"/><path d="M7.9 7.6L13.4 13.2M13.4 7.6L7.9 13.2" stroke="#E0101C" stroke-width="1.9"/></svg>
</div>
<div class="a" style="left:12px;top:276.2px;width:880px;height:1.5px;background:#D18A52"></div>
<div class="a" style="left:12px;top:293.8px;width:880px;height:1.3px;background:#D18A52"></div>
<div class="a" style="left:50px;top:258px;width:1px;height:304px;background:#CECECE"></div>
<div class="a" style="left:104px;top:258px;width:1px;height:304px;background:#CECECE"></div>
<div class="a" style="left:190px;top:258px;width:1px;height:304px;background:#CECECE"></div>
<div class="a" style="left:221px;top:258px;width:1px;height:304px;background:#CECECE"></div>
<div class="a" style="left:307px;top:258px;width:1px;height:304px;background:#CECECE"></div>
<div class="a" style="left:393px;top:258px;width:1px;height:304px;background:#CECECE"></div>
<div class="a" style="left:533px;top:258px;width:1px;height:304px;background:#CECECE"></div>
<div class="a" style="left:852px;top:258px;width:1px;height:304px;background:#CECECE"></div>
<div class="a" style="left:11px;top:258px;width:1px;height:304px;background:#C6C6C6"></div>
<svg style="left:307px;top:276px" width="88" height="20"><rect x="1" y="1.6" width="85" height="16.4" fill="#E6F2FA"/><path d="M1.4 6.5V1.4H6.4M80.5 1.4H85.5V6.5M85.5 13.5V18.4H80.5M6.4 18.4H1.4V13.5" fill="none" stroke="#E0202C" stroke-width="1.1"/></svg>
<div class="a" style="left:892px;top:276px;width:10px;height:286px;background:#F9F9F9;border-right:1px solid #CFCFCF;border-top:1px solid #CFCFCF;box-sizing:border-box"></div>
<div class="a" style="left:904px;top:277px;width:17px;height:16px;background:#F1F1F1"></div>
<div class="a" style="left:904px;top:294px;width:17px;height:18px;background:#F1F1F1"></div>
<div class="a" style="left:904px;top:526px;width:17px;height:17px;background:#F1F1F1"></div>
<div class="a" style="left:904px;top:544px;width:17px;height:18px;background:#F1F1F1"></div>
<div class="a" style="left:907px;top:313px;width:11px;height:60px;background:#B2BDCB"></div>
<div class="a" style="left:910px;top:340px;width:4px;height:1px;background:#F4F6F8"></div><div class="a" style="left:910px;top:343px;width:4px;height:1px;background:#F4F6F8"></div><div class="a" style="left:910px;top:346px;width:4px;height:1px;background:#F4F6F8"></div>
<svg style="left:907.4px;top:281.2px" width="9" height="6"><path d="M0.7 4.6L4.4 0.9L8.1 4.6" fill="none" stroke="#4A4A4A" stroke-width="1.8"/></svg>
<svg style="left:907.4px;top:299.40000000000003px" width="9" height="6"><path d="M0.7 0.7L4.4 4.4L8.1 0.7" fill="none" stroke="#4A4A4A" stroke-width="1.8"/></svg>
<svg style="left:907.4px;top:531.9px" width="9" height="6"><path d="M0.7 4.6L4.4 0.9L8.1 4.6" fill="none" stroke="#4A4A4A" stroke-width="1.8"/></svg>
<svg style="left:907.4px;top:549.6999999999999px" width="9" height="6"><path d="M0.7 0.7L4.4 4.4L8.1 0.7" fill="none" stroke="#4A4A4A" stroke-width="1.8"/></svg>
<div class="btn" style="left:877px;top:606px;width:27px;height:19px;border-color:#8A8A8A"></div>
<div class="btn" style="left:906px;top:606px;width:27px;height:19px;border-color:#8A8A8A"></div>
<svg style="left:877px;top:606px" width="27" height="19"><circle cx="12.7" cy="9.9" r="7.3" fill="#D9101A"/><path d="M9.3 6.5L16.1 13.3M16.1 6.5L9.3 13.3" stroke="#fff" stroke-width="2.5"/></svg>
<svg style="left:906px;top:606px" width="27" height="19"><path d="M8.4 13.6L17.4 5.2" stroke="#55585C" stroke-width="3.6"/><path d="M17.2 5.4L19.2 3.6" stroke="#6E90B4" stroke-width="3.6"/><path d="M5.6 16.8L7 12.4L9.8 15Z" fill="#E8B684"/><path d="M5.4 17L6 15.2L7.2 16.3Z" fill="#5A4A3A"/></svg>
</body></html>
